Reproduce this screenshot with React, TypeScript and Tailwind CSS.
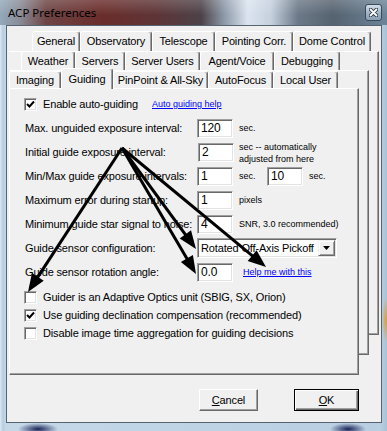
import React from "react";

type TabDef = { label: string; w: string; selected?: boolean };

const row1: TabDef[] = [
  { label: "General", w: "w-[48px]" },
  { label: "Observatory", w: "w-[72px]" },
  { label: "Telescope", w: "w-[63px]" },
  { label: "Pointing Corr.", w: "w-[78px]" },
  { label: "Dome Control", w: "w-[78px]" },
];

const row2: TabDef[] = [
  { label: "Weather", w: "w-[54px]" },
  { label: "Servers", w: "w-[50px]" },
  { label: "Server Users", w: "w-[75px]" },
  { label: "Agent/Voice", w: "w-[74px]" },
  { label: "Debugging", w: "w-[66px]" },
];

const row3: TabDef[] = [
  { label: "Imaging", w: "w-[52px]" },
  { label: "Guiding", w: "w-[52px]", selected: true },
  { label: "PinPoint & All-Sky", w: "w-[95px]" },
  { label: "AutoFocus", w: "w-[65px]" },
  { label: "Local User", w: "w-[65px]" },
];

// arrow tips, all drawn from one point
const ORIGIN = { x: 122, y: 148 };
const TIPS = [
  { x: 28, y: 292 },
  { x: 196, y: 249 },
  { x: 196, y: 274 },
  { x: 266, y: 267 },
];

function Tab({ tab, h }: { tab: TabDef; h: string }) {
  if (tab.selected) {
    return (
      <div
        className={`${tab.w} h-[21px] -mb-px relative z-10 flex items-center justify-center pt-[1px] bg-[#f0f0f0] border-t border-l border-white border-r border-r-[#696969] rounded-t-[3px] shadow-[inset_-1px_0_0_#a0a0a0] whitespace-nowrap`}
      >
        {tab.label}
      </div>
    );
  }
  return (
    <div
      className={`${tab.w} ${h} flex items-center justify-center bg-[#f0f0f0] border-t border-l border-white border-r border-r-[#696969] rounded-t-[3px] shadow-[inset_-1px_0_0_#a0a0a0] whitespace-nowrap`}
    >
      {tab.label}
    </div>
  );
}

function Checkbox({ checked }: { checked?: boolean }) {
  return (
    <div className="w-[13px] h-[13px] shrink-0 bg-white border border-t-[#a0a0a0] border-l-[#a0a0a0] border-b-white border-r-white shadow-[inset_1px_1px_0_#696969,inset_-1px_-1px_0_#e3e3e3] flex items-center justify-center">
      {checked && (
        <svg width="9" height="9" viewBox="0 0 9 9">
          <polyline points="1,4 3.5,6.5 8,1.5" fill="none" stroke="black" strokeWidth="2" />
        </svg>
      )}
    </div>
  );
}

function Field({ value }: { value: string }) {
  return (
    <div className="w-[36px] h-[19px] shrink-0 bg-white border border-t-[#a0a0a0] border-l-[#a0a0a0] border-b-white border-r-white shadow-[inset_1px_1px_0_#696969,inset_-1px_-1px_0_#e3e3e3] flex items-center pl-[3px] leading-none text-[12px]">
      {value}
    </div>
  );
}

function Small({ children, className = "" }: { children: React.ReactNode; className?: string }) {
  return <span className={`text-[9px] tracking-normal leading-[12px] whitespace-nowrap ${className}`}>{children}</span>;
}

function Link({ children, className = "" }: { children: React.ReactNode; className?: string }) {
  return <span className={`text-[9px] tracking-normal leading-none text-[#0000ff] underline whitespace-nowrap ${className}`}>{children}</span>;
}

function Row({ label, children }: { label: string; children?: React.ReactNode }) {
  return (
    <div className="h-[24px] flex items-center pl-px">
      <div className="w-[172px] whitespace-nowrap">{label}</div>
      {children}
    </div>
  );
}

function CheckRow({ label, checked }: { label: string; checked?: boolean }) {
  return (
    <div className="h-[18px] flex items-center">
      <Checkbox checked={checked} />
      <span className="ml-[6px] whitespace-nowrap">{label}</span>
    </div>
  );
}

function Arrows() {
  const L = 18;
  const W = 7;
  return (
    <svg className="absolute inset-0 pointer-events-none z-20" width="387" height="431">
      {TIPS.map((t, i) => {
        const dx = t.x - ORIGIN.x;
        const dy = t.y - ORIGIN.y;
        const len = Math.hypot(dx, dy);
        const ux = dx / len;
        const uy = dy / len;
        const bx = t.x - ux * L;
        const by = t.y - uy * L;
        const px = -uy * W;
        const py = ux * W;
        return (
          <g key={i}>
            <line x1={ORIGIN.x} y1={ORIGIN.y} x2={bx + ux * 2} y2={by + uy * 2} stroke="black" strokeWidth="3" />
            <polygon points={`${t.x},${t.y} ${bx + px},${by + py} ${bx - px},${by - py}`} fill="black" />
          </g>
        );
      })}
    </svg>
  );
}

export default function App() {
  return (
    <div className="relative w-[387px] h-[431px] overflow-hidden flex flex-col [background:radial-gradient(ellipse_20px_6px_at_38px_429px,#1b2458,transparent),radial-gradient(ellipse_18px_6px_at_348px_429px,#1b2458,transparent),radial-gradient(ellipse_4px_22px_at_386px_320px,#d9a040,transparent),linear-gradient(90deg,#dce9f3_0px,#b7cde0_3px,#c4d8e8_6px,#b9cfe1_380px,#a9c2d6_387px)] font-['Liberation_Sans',Arial,sans-serif] text-[11px] tracking-[-0.15px] text-black">
      {/* title bar */}
      <div className="h-[25px] shrink-0 flex items-center justify-between pl-[8px] pr-[5px] [background:linear-gradient(180deg,rgba(255,255,255,0.18),rgba(255,255,255,0)_60%),linear-gradient(90deg,#93a9bb_0%,#8a8d98_5%,#6e4444_12%,#6a2d2b_26%,#5e3436_40%,#4c4248_52%,#8e9aaa_58%,#dbe4ef_64%,#c6d0de_70%,#6c7988_77%,#55626f_86%,#6c8599_100%)]">
        <span className="font-['Noto_Sans',sans-serif] text-[11.5px] tracking-normal text-black">ACP Preferences</span>
        <div className="w-[17px] h-[17px] rounded-[3px] border border-[#3b4a5a] bg-[linear-gradient(180deg,#d5dfe9,#9fb2c4_55%,#8aa0b5)] flex items-center justify-center">
          <svg width="9" height="9" viewBox="0 0 9 9">
            <path d="M1.5 1.5L7.5 7.5M7.5 1.5L1.5 7.5" stroke="#2c3946" strokeWidth="3.6" strokeLinecap="round" />
            <path d="M1.5 1.5L7.5 7.5M7.5 1.5L1.5 7.5" stroke="white" strokeWidth="1.8" strokeLinecap="round" />
          </svg>
        </div>
      </div>

      {/* client area */}
      <div className="flex-1 pl-[6px] pr-[5px] pb-[8px] flex">
        <div className="flex-1 bg-[#f0f0f0] border border-[#55626f] flex flex-col">
          <div className="h-[344px] ml-[2px] mt-[5px]">
            <div className="flex pl-[23px] h-[20px]">
              {row1.map((t) => (
                <Tab key={t.label} tab={t} h="h-[20px]" />
              ))}
            </div>
            <div className="w-[370px] h-[284px] bg-[#f0f0f0] border-t border-t-white border-r border-b border-r-[#696969] border-b-[#696969] shadow-[inset_-1px_-1px_0_#a0a0a0]">
              <div className="flex pl-[12px] h-[19px] -mt-px items-end">
                {row2.map((t) => (
                  <Tab key={t.label} tab={t} h="h-[19px]" />
                ))}
              </div>
              <div className="w-[360px] h-[285px] bg-[#f0f0f0] border-t border-t-white border-r border-b border-r-[#696969] border-b-[#696969] shadow-[inset_-1px_-1px_0_#a0a0a0]">
                <div className="flex h-[19px] -mt-[2px] items-end">
                  {row3.map((t) => (
                    <Tab key={t.label} tab={t} h="h-[17px]" />
                  ))}
                </div>
                <div className="relative w-[350px] h-[287px] bg-[#f0f0f0] border border-t-white border-l-white border-r-[#696969] border-b-[#696969] shadow-[inset_-1px_-1px_0_#a0a0a0] pl-[14px] pt-[3px]">
                  <div className="h-[24px] flex items-center">
                    <Checkbox checked />
                    <span className="ml-[6px] w-[109px] whitespace-nowrap">Enable auto-guiding</span>
                    <Link>Auto guiding help</Link>
                  </div>
                  <Row label="Max. unguided exposure interval:">
                    <Field value="120" />
                    <Small className="ml-[6px]">sec.</Small>
                  </Row>
                  <Row label="Initial guide exposure interval:">
                    <div className="ml-px">
                      <Field value="2" />
                    </div>
                    <Small className="ml-[5px] pt-[1px]">
                      sec -- automatically
                      <br />
                      adjusted from here
                    </Small>
                  </Row>
                  <Row label="Min/Max guide exposure intervals:">
                    <Field value="1" />
                    <Small className="ml-[6px] w-[28px]">sec.</Small>
                    <Field value="10" />
                    <Small className="ml-[6px]">sec.</Small>
                  </Row>
                  <Row label="Maximum error during startup:">
                    <Field value="1" />
                    <Small className="ml-[6px]">pixels</Small>
                  </Row>
                  <Row label="Minimum guide star signal to noise:">
                    <Field value="4" />
                    <Small className="ml-[6px]">SNR, 3.0 recommended)</Small>
                  </Row>
                  <Row label="Guide sensor configuration:">
                    <div className="w-[140px] h-[20px] bg-white border border-t-[#a0a0a0] border-l-[#a0a0a0] border-b-white border-r-white shadow-[inset_1px_1px_0_#696969,inset_-1px_-1px_0_#e3e3e3] flex items-center pl-[3px] pr-[1px]">
                      <span className="flex-1 whitespace-nowrap leading-none">Rotated Off-Axis Pickoff</span>
                      <div className="w-[17px] h-[16px] bg-[#f0f0f0] border border-t-[#f0f0f0] border-l-[#f0f0f0] border-b-[#696969] border-r-[#696969] shadow-[inset_1px_1px_0_#fff,inset_-1px_-1px_0_#a0a0a0] flex items-center justify-center">
                        <svg width="7" height="4" viewBox="0 0 7 4">
                          <polygon points="0,0 7,0 3.5,4" fill="black" />
                        </svg>
                      </div>
                    </div>
                  </Row>
                  <Row label="Guide sensor rotation angle:">
                    <Field value="0.0" />
                    <Link className="ml-[10px]">Help me with this</Link>
                  </Row>
                  <div className="mt-[4px]">
                    <CheckRow label="Guider is an Adaptive Optics unit (SBIG, SX, Orion)" />
                    <CheckRow label="Use guiding declination compensation (recommended)" checked />
                    <CheckRow label="Disable image time aggregation for guiding decisions" />
                  </div>
                </div>
              </div>
            </div>
          </div>

          <div className="mt-[14px] flex justify-end pr-[22px] gap-[36px]">
            <div className="w-[59px] h-[22px] bg-[#f0f0f0] border border-t-white border-l-white border-b-[#696969] border-r-[#696969] shadow-[inset_-1px_-1px_0_#a0a0a0] flex items-center justify-center">
              <span>
                <u>C</u>ancel
              </span>
            </div>
            <div className="w-[65px] h-[22px] bg-[#f0f0f0] border border-black shadow-[inset_1px_1px_0_#fff,inset_-1px_-1px_0_#696969,inset_-2px_-2px_0_#a0a0a0] flex items-center justify-center">
              <span>
                <u>O</u>K
              </span>
            </div>
          </div>
        </div>
      </div>

      <Arrows />
    </div>
  );
}
